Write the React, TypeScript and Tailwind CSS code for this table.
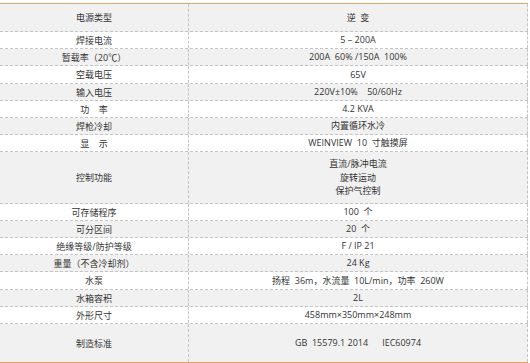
import React from "react";

type Spec = { label: string; value: string[]; h: string };

const rows: Spec[] = [
  { label: "电源类型", value: ["逆  变"], h: "h-[28px]" },
  { label: "焊接电流", value: ["5 – 200A"], h: "h-[17px]" },
  { label: "暂载率（20℃）", value: ["200A  60% /150A  100%"], h: "h-[17px]" },
  { label: "空载电压", value: ["65V"], h: "h-[18px]" },
  { label: "输入电压", value: ["220V±10%    50/60Hz"], h: "h-[17px]" },
  { label: "功    率", value: ["4.2 KVA"], h: "h-[17px]" },
  { label: "焊枪冷却", value: ["内置循环水冷"], h: "h-[17px]" },
  { label: "显    示", value: ["WEINVIEW  10  寸触摸屏"], h: "h-[17px]" },
  { label: "控制功能", value: ["直流/脉冲电流", "旋转运动", "保护气控制"], h: "h-[52px]" },
  { label: "可存储程序", value: ["100  个"], h: "h-[17px]" },
  { label: "可分区间", value: ["20  个"], h: "h-[17px]" },
  { label: "绝缘等级/防护等级", value: ["F / IP 21"], h: "h-[17px]" },
  { label: "重量（不含冷却剂）", value: ["24 Kg"], h: "h-[17px]" },
  { label: "水泵", value: ["扬程  36m，水流量  10L/min，功率  260W"], h: "h-[18px]" },
  { label: "水箱容积", value: ["2L"], h: "h-[17px]" },
  { label: "外形尺寸", value: ["458mm×350mm×248mm"], h: "h-[17px]" },
  { label: "制造标准", value: ["GB  15579.1 2014      IEC60974"], h: "h-[38px]" },
];

export default function App() {
  return (
    <div className="w-[530px] h-[363px] bg-white pt-[3px] overflow-hidden font-['Open_Sans','Noto_Sans_CJK_SC',sans-serif] text-[9px] text-[#333]">
      <div className="w-[528px] border-t border-t-[#e9a46c] border-b-2 border-b-[#f4a040]">
        {rows.map((r, i) => (
          <div
            key={r.label}
            className={`grid grid-cols-[189px_1fr] ${r.h} ${i % 2 === 0 ? "bg-[#f1f1f1]" : "bg-white"} ${
              i < rows.length - 1 ? "border-b border-dashed border-b-[#c4c4c4]" : ""
            }`}
          >
            <div className="flex items-center justify-center border-r border-dashed border-r-[#c4c4c4] whitespace-pre leading-none">
              {r.label}
            </div>
            <div className="flex flex-col items-center justify-center border-r border-dashed border-r-[#c4c4c4] whitespace-pre leading-[13.5px]">
              {r.value.map((v) => (
                <span key={v}>{v}</span>
              ))}
            </div>
          </div>
        ))}
      </div>
    </div>
  );
}
